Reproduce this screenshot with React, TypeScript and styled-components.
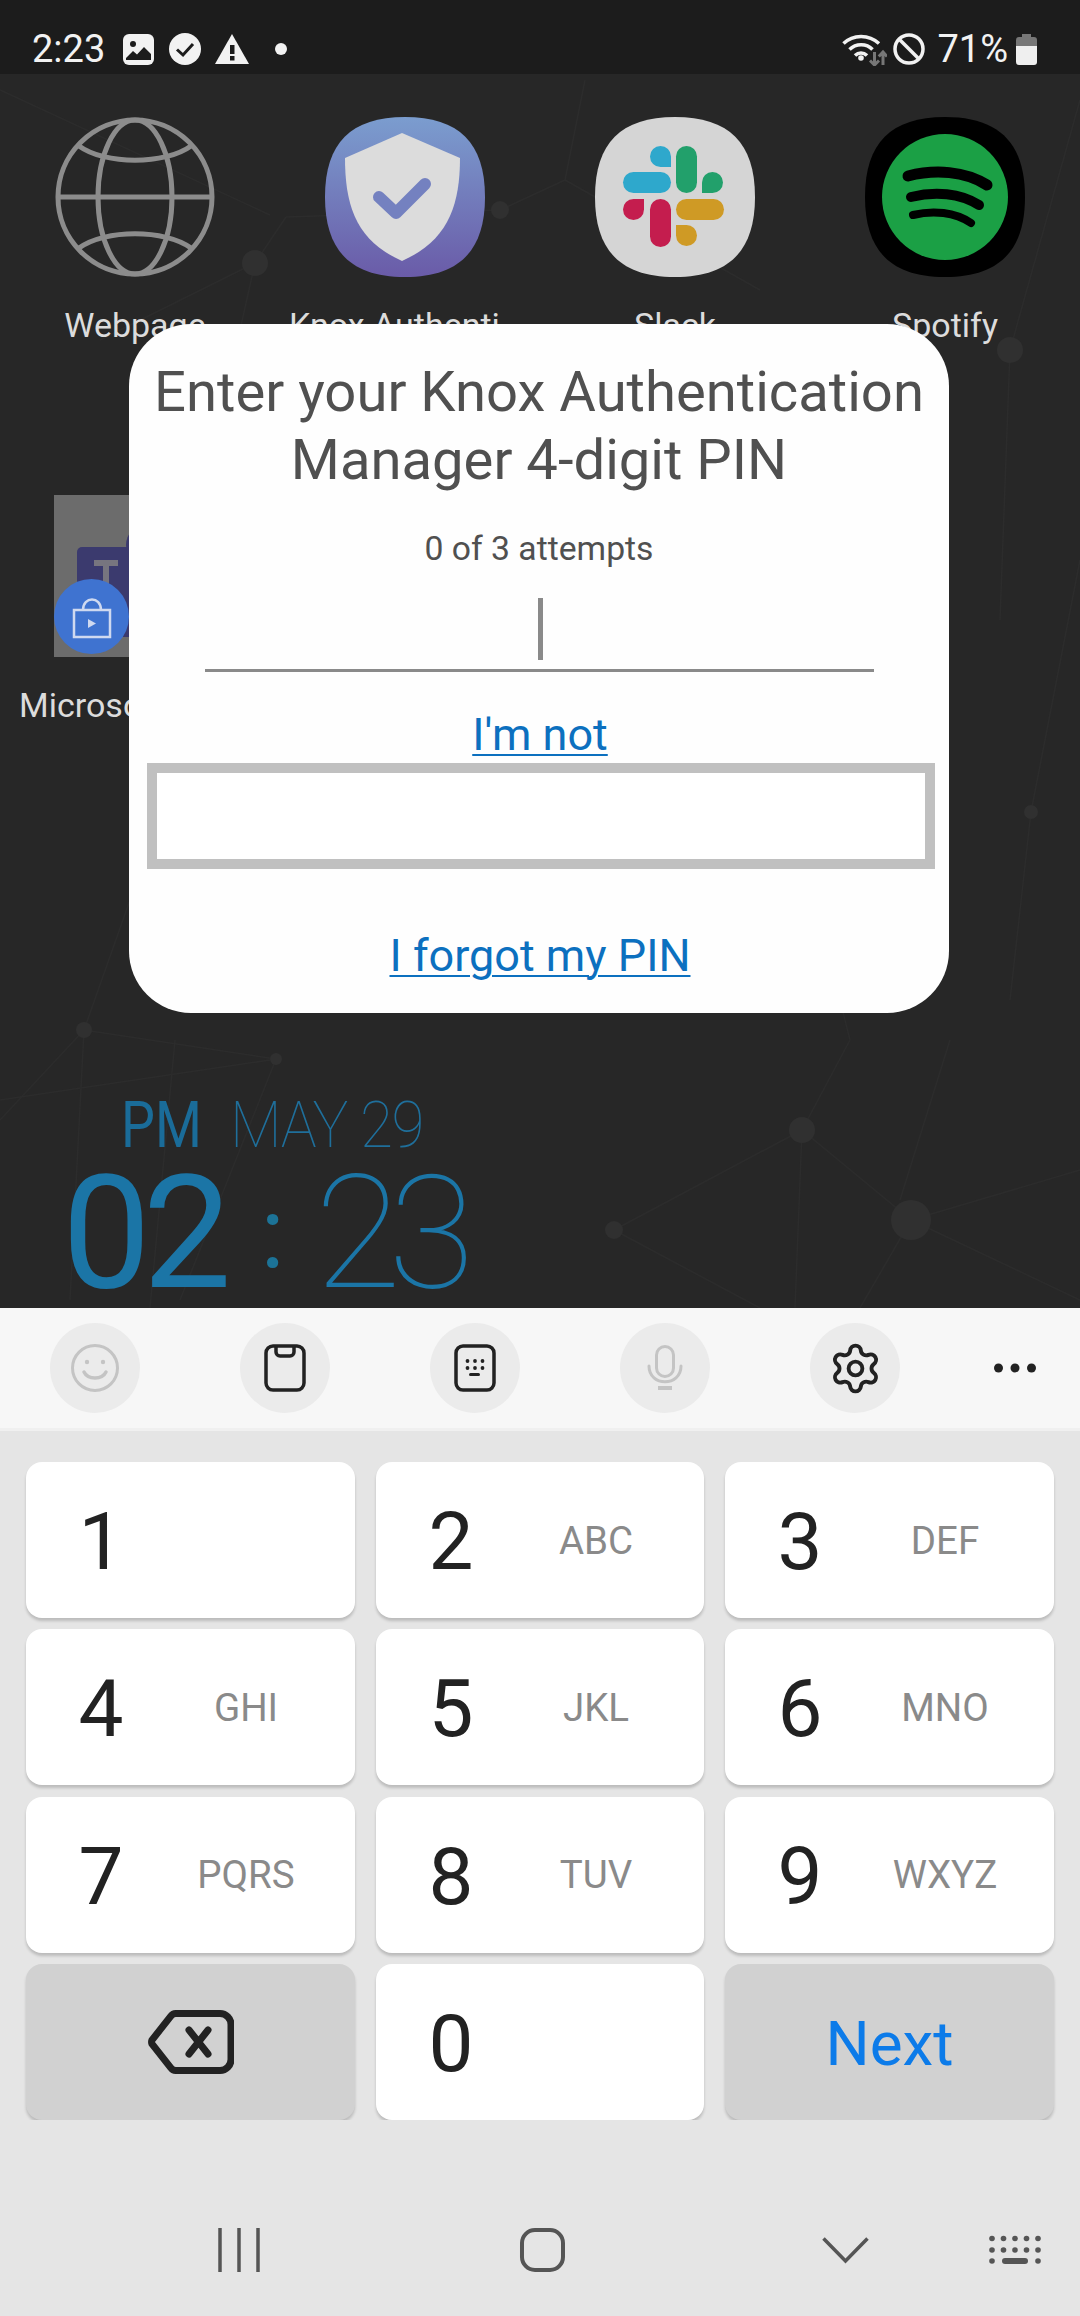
import React from 'react';
import styled, { createGlobalStyle } from 'styled-components';
import { Settings } from 'lucide-react';

const Global = createGlobalStyle`
  html, body { margin: 0; padding: 0; background: #e5e5e5; }
  * { box-sizing: border-box; }
`;

const Phone = styled.div`
  width: 1080px;
  height: 2316px;
  display: flex;
  flex-direction: column;
  overflow: hidden;
  font-family: Roboto, "Liberation Sans", sans-serif;
`;

const StatusBar = styled.div`
  height: 74px;
  flex: none;
  background: #1c1c1c;
  color: #f2f2f2;
  display: flex;
  align-items: center;
  justify-content: space-between;
  padding: 0 43px 0 32px;
  font-size: 38px;
`;
const StatusGroup = styled.div`
  display: flex;
  align-items: center;
  padding-top: 24px;
  height: 74px;
`;
const StatusText = styled.span<{ $after: number }>`
  line-height: 32px;
  margin-right: ${p => p.$after}px;
`;
const StatusIcon = styled.svg<{ $after?: number }>`
  display: block;
  flex: none;
  margin-right: ${p => p.$after ?? 0}px;
`;

const Home = styled.div`
  position: relative;
  height: 1234px;
  flex: none;
  background: #272727;
  overflow: hidden;
`;
const Wallpaper = styled.svg`
  position: absolute;
  inset: 0;
  width: 1080px;
  height: 1234px;
`;
const AppGrid = styled.div`
  position: relative;
  display: grid;
  grid-template-columns: repeat(4, 270px);
  grid-auto-rows: 378px;
  padding-top: 43px;
`;
const AppCell = styled.div`
  display: flex;
  flex-direction: column;
  align-items: center;
`;
const AppIcon = styled.svg`
  width: 160px;
  height: 160px;
  display: block;
  flex: none;
`;
const AppLabel = styled.div<{ $clipped?: boolean }>`
  margin-top: 28px;
  font-size: 34px;
  line-height: 40px;
  color: #dcdcdc;
  white-space: nowrap;
  ${p => (p.$clipped ? 'width: 232px; overflow: hidden; text-align: left;' : '')}
`;
const TeamsTile = styled.div`
  position: relative;
  width: 162px;
  height: 162px;
  flex: none;
`;
const TileArt = styled.svg`
  display: block;
  width: 162px;
  height: 162px;
`;
const WorkBadge = styled.div`
  position: absolute;
  left: 0;
  bottom: 3px;
  width: 75px;
  height: 75px;
  border-radius: 50%;
  background: #3f73d0;
  display: flex;
  align-items: center;
  justify-content: center;
`;

const ClockWidget = styled.div`
  position: relative;
  margin-top: 217px;
  padding-left: 69px;
  color: #1b75a6;
`;
const ClockDateRow = styled.div`
  display: flex;
  align-items: baseline;
  padding-left: 52px;
  height: 72px;
  line-height: 72px;
`;
const ClockPm = styled.span`
  display: inline-block;
  width: 78px;
  font-size: 64px;
  font-weight: 400;
  color: #1a6c99;
  transform: scaleX(0.84);
  transform-origin: left center;
  margin-right: 31px;
`;
const ClockDate = styled.span`
  display: inline-block;
  font-size: 64px;
  font-weight: 100;
  color: #1f6f9b;
  letter-spacing: -1.5px;
  transform: scaleX(0.94);
  transform-origin: left center;
`;
const ClockTimeRow = styled.div`
  display: flex;
  align-items: center;
  height: 124px;
  margin-top: 9px;
  line-height: 124px;
`;
const ClockHours = styled.span`
  font-size: 158px;
  font-weight: 400;
  letter-spacing: -8px;
  margin-left: -7px;
`;
const ClockColon = styled.span`
  font-size: 100px;
  color: #1c7397;
  margin-left: 37px;
  margin-right: 30px;
`;
const ClockMinutes = styled.span`
  font-size: 158px;
  font-weight: 100;
  letter-spacing: -13px;
`;

const Dialog = styled.div`
  position: absolute;
  left: 129px;
  top: 250px;
  width: 820px;
  height: 689px;
  background: #fefefe;
  border-radius: 62px;
  display: flex;
  flex-direction: column;
  align-items: center;
  padding-top: 34px;
`;
const Title = styled.div`
  width: 100%;
  font-size: 56.2px;
  line-height: 68px;
  text-align: center;
  color: #505050;
`;
const Attempts = styled.div`
  margin-top: 35px;
  font-size: 33.7px;
  line-height: 40px;
  color: #505050;
`;
const PinField = styled.div`
  margin-top: 29px;
  width: 669px;
  height: 74px;
  border-bottom: 3px solid #8a8a8a;
  display: flex;
  justify-content: center;
`;
const Caret = styled.div`
  width: 5px;
  height: 62px;
  background: #8a8a8a;
  margin-left: 3px;
`;
const DialogLink = styled.a<{ $top: number }>`
  display: block;
  margin: ${p => p.$top}px 0 0 2px;
  font-size: 45px;
  line-height: 50px;
  color: #0c70bf;
  text-decoration: underline;
  text-underline-offset: 4px;
  text-decoration-thickness: 2px;
`;
const BlankFrame = styled.div`
  margin: 3px 0 0 3px;
  width: 788px;
  height: 106px;
  border: 10px solid #c0c0c0;
  background: #fff;
`;

const Toolbar = styled.div`
  height: 123px;
  flex: none;
  background: #f7f7f7;
  border-bottom: 3px solid #f0f0f0;
  display: flex;
  align-items: center;
  padding: 0 0 0 50px;
  gap: 100px;
`;
const ToolButton = styled.div`
  width: 90px;
  height: 90px;
  flex: none;
  border-radius: 50%;
  background: #ebebeb;
  display: flex;
  align-items: center;
  justify-content: center;
`;
const MoreDots = styled.svg`
  width: 44px;
  height: 12px;
  margin-left: -7px;
  flex: none;
`;

const Keypad = styled.div`
  flex: none;
  height: 689px;
  background: #e5e5e5;
  display: grid;
  grid-template-columns: 329px 328px 329px;
  grid-auto-rows: 156px;
  column-gap: 21px;
  row-gap: 11.33px;
  padding: 31px 26px 0;
`;
const Key = styled.div<{ $action?: boolean }>`
  background: ${p => (p.$action ? '#d1d1d1' : '#ffffff')};
  border-radius: 16px;
  box-shadow: 0 3px 3px rgba(0, 0, 0, 0.18);
  display: grid;
  grid-template-columns: 150px 140px;
  align-items: center;
  justify-items: center;
`;
const ActionKey = styled(Key)`
  display: flex;
  justify-content: center;
`;
const Digit = styled.span`
  font-size: 80px;
  line-height: 1;
  color: #222;
  padding-top: 4px;
`;
const Letters = styled.span`
  font-size: 38.5px;
  color: #8a8a8a;
`;
const NextLabel = styled.span`
  font-size: 62px;
  color: #0c7be9;
  padding-top: 4px;
`;

const NavBar = styled.div`
  flex: none;
  height: 196px;
  display: grid;
  grid-template-columns: 300px 306px 300px 40px;
  padding: 64px 0 0 89px;
  align-items: center;
  justify-items: center;
  background: #e5e5e5;
`;
const NavIcon = styled.svg`
  display: block;
  overflow: visible;
`;

const Squircle = 'M80 0C134 0 160 26 160 80C160 134 134 160 80 160C26 160 0 134 0 80C0 26 26 0 80 0Z';

const wires: [number, number, number, number][] = [
  [0, 90, 270, 215], [255, 263, 286, 217], [286, 217, 500, 210], [500, 210, 565, 180], [565, 180, 585, 80],
  [565, 180, 760, 290], [255, 263, 100, 340], [255, 263, 240, 330], [1010, 350, 1000, 620], [1010, 350, 1080, 100],
  [1031, 812, 1010, 1000], [1031, 812, 1080, 560], [84, 1030, 276, 1059], [84, 1030, 0, 1120], [84, 1030, 70, 1300],
  [276, 1059, 180, 1300], [84, 1030, 130, 900], [802, 1130, 911, 1220], [802, 1130, 614, 1230], [802, 1130, 795, 1308],
  [911, 1220, 1080, 1170], [911, 1220, 1080, 1300], [911, 1220, 860, 1308], [614, 1230, 760, 1308], [802, 1130, 850, 1040],
  [850, 1040, 840, 1000], [950, 1040, 900, 1200], [0, 1100, 270, 1060], [175, 1040, 150, 1308],
];
const nodes: [number, number, number][] = [
  [255, 263, 13], [500, 210, 9], [1010, 350, 13], [1031, 812, 7], [84, 1030, 8], [276, 1059, 6],
  [802, 1130, 13], [911, 1220, 20], [614, 1230, 9],
];

const Keys: [string, string][] = [
  ['1', ''], ['2', 'ABC'], ['3', 'DEF'],
  ['4', 'GHI'], ['5', 'JKL'], ['6', 'MNO'],
  ['7', 'PQRS'], ['8', 'TUV'], ['9', 'WXYZ'],
];

export default function App() {
  return (
    <Phone>
      <Global />
      <StatusBar>
        <StatusGroup>
          <StatusText $after={18}>2:23</StatusText>
          <StatusIcon $after={15} width="31" height="31" viewBox="0 0 31 31">
            <rect width="31" height="31" rx="6" fill="#f2f2f2" />
            <circle cx="10" cy="10" r="3" fill="#1c1c1c" />
            <path d="M3 26V24L10 17L14 20.500L21 13L28 20V26Z" fill="#1c1c1c" />
          </StatusIcon>
          <StatusIcon $after={14} width="32" height="32" viewBox="0 0 32 32">
            <circle cx="16" cy="16" r="16" fill="#f2f2f2" />
            <path d="M8 16.500L14 22L24 11" fill="none" stroke="#1c1c1c" strokeWidth="3" />
          </StatusIcon>
          <StatusIcon $after={26} width="34" height="31" viewBox="0 0 34 31">
            <path d="M17 0L34 30H0Z" fill="#f2f2f2" />
            <rect x="15" y="11" width="4.500" height="9" fill="#1c1c1c" />
            <rect x="15" y="22" width="4.500" height="4.500" fill="#1c1c1c" />
          </StatusIcon>
          <StatusIcon width="12" height="12" viewBox="0 0 12 12">
            <circle cx="6" cy="6" r="6" fill="#f2f2f2" />
          </StatusIcon>
        </StatusGroup>
        <StatusGroup>
          <StatusIcon $after={6} width="45" height="34" viewBox="0 0 45 34">
            <g fill="none" stroke="#f2f2f2" strokeWidth="3.500">
              <path d="M1.500 11.500C11 2 27 2 37 11.500" />
              <path d="M7.500 17.500C14 11 24.500 11 30.500 17.500" />
              <path d="M13 23.500C16.500 20 21.500 20 25 23.500" />
            </g>
            <circle cx="19" cy="26" r="2.800" fill="#f2f2f2" />
            <path d="M32.500 20V33M28 28.500L32.500 33L37 28.500" fill="none" stroke="#777" strokeWidth="3" />
            <path d="M41 33V20M36.800 24.500L41 20L45 24.500" fill="none" stroke="#777" strokeWidth="3" />
          </StatusIcon>
          <StatusIcon $after={12} width="32" height="32" viewBox="0 0 32 32">
            <circle cx="16" cy="16" r="14" fill="none" stroke="#f2f2f2" strokeWidth="3.500" />
            <path d="M6.500 6.500L25.500 25.500" stroke="#f2f2f2" strokeWidth="3.500" />
          </StatusIcon>
          <StatusText $after={8}>71%</StatusText>
          <StatusIcon width="21" height="31" viewBox="0 0 21 31">
            <path d="M6 0H15V3H18A3 3 0 0 1 21 6V12H0V6A3 3 0 0 1 3 3H6Z" fill="#777" />
            <path d="M0 12H21V28A3 3 0 0 1 18 31H3A3 3 0 0 1 0 28Z" fill="#efefef" />
          </StatusIcon>
        </StatusGroup>
      </StatusBar>

      <Home>
        <Wallpaper viewBox="0 74 1080 1234">
          {wires.map(([a, b, c, d], i) => (
            <line key={i} x1={a} y1={b} x2={c} y2={d} stroke="#2c2c2c" strokeWidth="1.500" />
          ))}
          {nodes.map(([x, y, r], i) => (
            <circle key={i} cx={x} cy={y} r={r} fill="#303030" />
          ))}
        </Wallpaper>
        <AppGrid>
          <AppCell>
            <AppIcon viewBox="0 0 160 160">
              <g fill="none" stroke="#8c8c8c" strokeWidth="5">
                <circle cx="80" cy="80" r="77" />
                <ellipse cx="80" cy="80" rx="37" ry="77" />
                <path d="M3 80H157" />
                <path d="M24 29C50 48 110 48 136 29" />
                <path d="M24 131C50 112 110 112 136 131" />
              </g>
            </AppIcon>
            <AppLabel>Webpage</AppLabel>
          </AppCell>
          <AppCell>
            <AppIcon viewBox="0 0 160 160">
              <defs>
                <linearGradient id="knoxBg" x1="0" y1="0" x2="0" y2="1">
                  <stop offset="0" stopColor="#7b9dcf" />
                  <stop offset="1" stopColor="#6a5ba8" />
                </linearGradient>
              </defs>
              <path d={Squircle} fill="url(#knoxBg)" />
              <path d="M77 16L135 41C135 90 122 124 77 144C32 124 20 90 20 41Z" fill="#dcdcdc" />
              <path d="M54 80L71 96L100 67" fill="none" stroke="#7481c0" strokeWidth="12" strokeLinecap="round" strokeLinejoin="round" />
            </AppIcon>
            <AppLabel $clipped>Knox Authenti</AppLabel>
          </AppCell>
          <AppCell>
            <AppIcon viewBox="0 0 160 160">
              <path d={Squircle} fill="#d5d5d5" />
              <g transform="translate(28 29)">
                <path d="M48 21H37.500A10.500 10.500 0 1 1 48 10.500Z" fill="#2ea8cc" />
                <rect x="0" y="26" width="48" height="21" rx="10.500" fill="#2ea8cc" />
                <rect x="53" y="0" width="21" height="47" rx="10.500" fill="#22a06b" />
                <path d="M79 47V36.500A10.500 10.500 0 1 1 89.500 47Z" fill="#22a06b" />
                <path d="M21 53V63.500A10.500 10.500 0 1 1 10.500 53Z" fill="#c41d4e" />
                <rect x="27" y="53" width="21" height="48" rx="10.500" fill="#c41d4e" />
                <rect x="53" y="53" width="48" height="21" rx="10.500" fill="#cf9a25" />
                <path d="M53 79H63.500A10.500 10.500 0 1 1 53 89.500Z" fill="#cf9a25" />
              </g>
            </AppIcon>
            <AppLabel>Slack</AppLabel>
          </AppCell>
          <AppCell>
            <AppIcon viewBox="0 0 160 160">
              <path d={Squircle} fill="#000" />
              <circle cx="80" cy="80" r="63" fill="#1ba045" />
              <g fill="none" stroke="#000" strokeLinecap="round">
                <path d="M43 59C70 52 100 54 122 68" strokeWidth="11" />
                <path d="M46 80C70 74 95 76 114 88" strokeWidth="10" />
                <path d="M48 98C68 93 90 95 106 106" strokeWidth="8" />
              </g>
            </AppIcon>
            <AppLabel>Spotify</AppLabel>
          </AppCell>
          <AppCell>
            <TeamsTile>
              <TileArt viewBox="0 0 162 162">
                <rect width="162" height="162" fill="#6c6c6c" />
                <rect x="23" y="52" width="139" height="90" rx="5" fill="#3b3a6e" />
                <circle cx="92" cy="50" r="20" fill="#3b3a6e" />
                <path d="M40 68H64M52 68V100" stroke="#77757f" strokeWidth="6" fill="none" />
              </TileArt>
              <WorkBadge>
                <svg width="40" height="44" viewBox="0 0 40 44">
                  <g fill="none" stroke="#cfd9f0" strokeWidth="2.500">
                    <rect x="2" y="15" width="36" height="27" />
                    <path d="M11 15C11 1 29 1 29 15" />
                  </g>
                  <path d="M16 24L24 28.500L16 33Z" fill="#cfd9f0" />
                </svg>
              </WorkBadge>
            </TeamsTile>
            <AppLabel $clipped>Microsoft Teams</AppLabel>
          </AppCell>
        </AppGrid>
        <ClockWidget>
          <ClockDateRow>
            <ClockPm>PM</ClockPm>
            <ClockDate>MAY 29</ClockDate>
          </ClockDateRow>
          <ClockTimeRow>
            <ClockHours>02</ClockHours>
            <ClockColon>:</ClockColon>
            <ClockMinutes>23</ClockMinutes>
          </ClockTimeRow>
        </ClockWidget>
        <Dialog>
          <Title>
            Enter your Knox Authentication
            <br />
            Manager 4-digit PIN
          </Title>
          <Attempts>0 of 3 attempts</Attempts>
          <PinField>
            <Caret />
          </PinField>
          <DialogLink $top={38}>I'm not</DialogLink>
          <BlankFrame />
          <DialogLink $top={62}>I forgot my PIN</DialogLink>
        </Dialog>
      </Home>

      <Toolbar>
        <ToolButton>
          <svg width="48" height="48" viewBox="0 0 48 48">
            <circle cx="24" cy="24" r="22.500" fill="none" stroke="#c4c4c4" strokeWidth="3" />
            <circle cx="16" cy="18" r="2.200" fill="#c4c4c4" />
            <circle cx="32" cy="18" r="2.200" fill="#c4c4c4" />
            <path d="M13 28C17 36 31 36 35 28" fill="none" stroke="#c4c4c4" strokeWidth="3.500" strokeLinecap="round" />
          </svg>
        </ToolButton>
        <ToolButton>
          <svg width="42" height="48" viewBox="0 0 42 48">
            <rect x="2" y="2" width="38" height="44" rx="7" fill="none" stroke="#222" strokeWidth="3.500" />
            <path d="M12 2V8A4 4 0 0 0 16 12H26A4 4 0 0 0 30 8V2" fill="none" stroke="#222" strokeWidth="3.500" />
          </svg>
        </ToolButton>
        <ToolButton>
          <svg width="42" height="48" viewBox="0 0 42 48">
            <rect x="2" y="2" width="38" height="44" rx="7" fill="none" stroke="#222" strokeWidth="3.500" />
            {[0, 1].flatMap(r =>
              [0, 1, 2].map(c => <circle key={`${r}${c}`} cx={13.500 + c * 7.500} cy={17 + r * 7} r="1.900" fill="#222" />)
            )}
            <rect x="15" y="29" width="11" height="3" rx="1.500" fill="#222" />
          </svg>
        </ToolButton>
        <ToolButton>
          <svg width="36" height="46" viewBox="0 0 36 46">
            <rect x="9.500" y="1.500" width="17" height="30" rx="8.500" fill="none" stroke="#c4c4c4" strokeWidth="3" />
            <path d="M2 21C2 42 34 42 34 21" fill="none" stroke="#c4c4c4" strokeWidth="3" strokeLinecap="round" />
            <rect x="11" y="41" width="14" height="4" fill="#c4c4c4" />
          </svg>
        </ToolButton>
        <ToolButton>
          <Settings size={55} strokeWidth={1.7} color="#222" />
        </ToolButton>
        <MoreDots viewBox="0 0 44 12">
          <circle cx="5.500" cy="6" r="4.500" fill="#222" />
          <circle cx="22" cy="6" r="4.500" fill="#222" />
          <circle cx="38.500" cy="6" r="4.500" fill="#222" />
        </MoreDots>
      </Toolbar>

      <Keypad>
        {Keys.map(([d, l]) => (
          <Key key={d}>
            <Digit>{d}</Digit>
            <Letters>{l}</Letters>
          </Key>
        ))}
        <ActionKey $action>
          <svg width="86" height="64" viewBox="0 0 86 64">
            <path d="M28 3.500H72A11 11 0 0 1 83 14.500V49.500A11 11 0 0 1 72 60.500H28A6 6 0 0 1 23 58L4 34A5 5 0 0 1 4 30L23 6A6 6 0 0 1 28 3.500Z" fill="none" stroke="#222" strokeWidth="7" />
            <path d="M41 20L60 44M60 20L41 44" fill="none" stroke="#222" strokeWidth="7" strokeLinecap="round" />
          </svg>
        </ActionKey>
        <Key>
          <Digit>0</Digit>
          <Letters />
        </Key>
        <ActionKey $action>
          <NextLabel>Next</NextLabel>
        </ActionKey>
      </Keypad>

      <NavBar>
        <NavIcon width="42" height="44" viewBox="0 0 42 44">
          <path d="M2 0V44M21 0V44M40 0V44" stroke="#555" strokeWidth="3.500" fill="none" />
        </NavIcon>
        <NavIcon width="45" height="44" viewBox="0 0 45 44">
          <rect x="2" y="2" width="41" height="40" rx="13" fill="none" stroke="#555" strokeWidth="4" />
        </NavIcon>
        <NavIcon width="47" height="26" viewBox="0 0 47 26">
          <path d="M1.500 1.500L23.500 24L45.500 1.500" fill="none" stroke="#555" strokeWidth="3.500" />
        </NavIcon>
        <NavIcon width="52" height="30" viewBox="0 0 52 30">
          {[0, 1].flatMap(r =>
            [0, 1, 2, 3, 4].map(c => <circle key={`${r}-${c}`} cx={3 + c * 11.500} cy={3.500 + r * 11.500} r="2.800" fill="#555" />)
          )}
          <circle cx="3" cy="26" r="2.800" fill="#555" />
          <rect x="13" y="23" width="26" height="6" rx="3" fill="#555" />
          <circle cx="49" cy="26" r="2.800" fill="#555" />
        </NavIcon>
      </NavBar>
    </Phone>
  );
}
